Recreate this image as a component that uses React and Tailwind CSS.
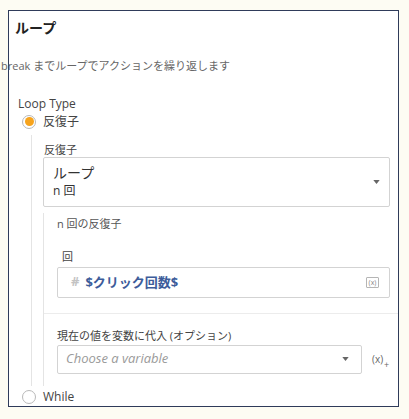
import React from "react";

const font = "font-['Open_Sans','Noto_Sans_CJK_JP',sans-serif]";

function Radio({ checked }) {
  return (
    <span className="w-[14px] h-[14px] rounded-full border border-[#b9b9b9] bg-white flex items-center justify-center shrink-0">
      {checked && <span className="w-[9px] h-[9px] rounded-full bg-[#f7a41d]" />}
    </span>
  );
}

function Caret() {
  return (
    <svg width="7" height="4" viewBox="0 0 8 5" className="shrink-0">
      <path d="M0 0 L8 0 L4 5 Z" fill="#666" />
    </svg>
  );
}

function VarIcon() {
  return (
    <span className="w-[13px] h-[11px] border border-[#b5b5b5] rounded-[1px] flex items-center justify-center text-[7px] leading-none text-[#888]">
      (x)
    </span>
  );
}

function App() {
  return (
    <div className={`w-[409px] h-[419px] bg-[#fdfcf3] pt-[10px] pl-[8px] ${font}`}>
      <div className="w-[391px] h-[397px] border border-[#2f3b5a] bg-white flex flex-col">
        {/* header */}
        <div className="ml-[6px] mt-[7px] text-[14px] leading-[20px] font-bold text-[#222]">ループ</div>
        <div className="ml-[-8px] mt-[20px] text-[11px] leading-[16px] text-[#666]">
          break までループでアクションを繰り返します
        </div>

        <div className="ml-[9px] mt-[22px] text-[12px] leading-[16px] text-[#444]">Loop Type</div>
        <div className="ml-[13px] mt-[1px] h-[18px] flex items-center gap-[7px] text-[12px] text-[#444]">
          <Radio checked />
          <span className="leading-[16px]">反復子</span>
        </div>

        {/* iterator block */}
        <div className="ml-[22px] mt-[4px] border-l border-[#e4e4e4] pl-[11px] flex flex-col h-[259px]">
          <div className="ml-[1px] mt-[8px] text-[11px] leading-[14px] text-[#444]">反復子</div>
          <div className="mt-[0px] mr-[8px] h-[50px] border border-[#d3d3d3] rounded-[2px] flex items-center pl-[9px] pr-[9px]">
            <div className="flex-1 flex flex-col">
              <span className="text-[14px] leading-[18px] text-[#333]">ループ</span>
              <span className="text-[12px] leading-[18px] text-[#333]">n 回</span>
            </div>
            <Caret />
          </div>

          {/* nested panel */}
          <div className="mt-[6px] flex-1 border-l border-[#e4e4e4] flex flex-col">
            <div className="ml-[13px] mt-[3px] text-[11px] leading-[16px] text-[#555]">n 回の反復子</div>
            <div className="ml-[18px] mt-[18px] text-[11px] leading-[14px] text-[#444]">回</div>
            <div className="ml-[13px] mr-[8px] mt-[3px] h-[31px] border border-[#d3d3d3] rounded-[2px] flex items-center pl-[13px] pr-[10px]">
              <span className="text-[13px] text-[#c3c3c3] font-bold mr-[6px]">#</span>
              <span className="flex-1 text-[13px] leading-[18px] font-bold text-[#3d5c9a]">$クリック回数$</span>
              <VarIcon />
            </div>
            <div className="mt-[15px] border-t border-[#ececec]" />
            <div className="ml-[13px] mt-[14px] text-[11px] leading-[16px] text-[#444]">現在の値を変数に代入 (オプション)</div>
            <div className="ml-[13px] mt-[1px] flex items-center">
              <div className="w-[305px] h-[29px] border border-[#d3d3d3] rounded-[2px] flex items-center pl-[8px] pr-[12px]">
                <span className="flex-1 text-[13px] italic text-[#9a9a9a]">Choose a variable</span>
                <Caret />
              </div>
              <span className="ml-[10px] relative text-[10px] leading-none text-[#666]">
                (x)
                <span className="absolute left-[12px] top-[6px] text-[9px] text-[#666]">+</span>
              </span>
            </div>
          </div>
        </div>

        <div className="ml-[13px] mt-[2px] h-[18px] flex items-center gap-[7px] text-[12px] text-[#444]">
          <Radio />
          <span className="leading-[16px]">While</span>
        </div>
      </div>
    </div>
  );
}

export default App;
